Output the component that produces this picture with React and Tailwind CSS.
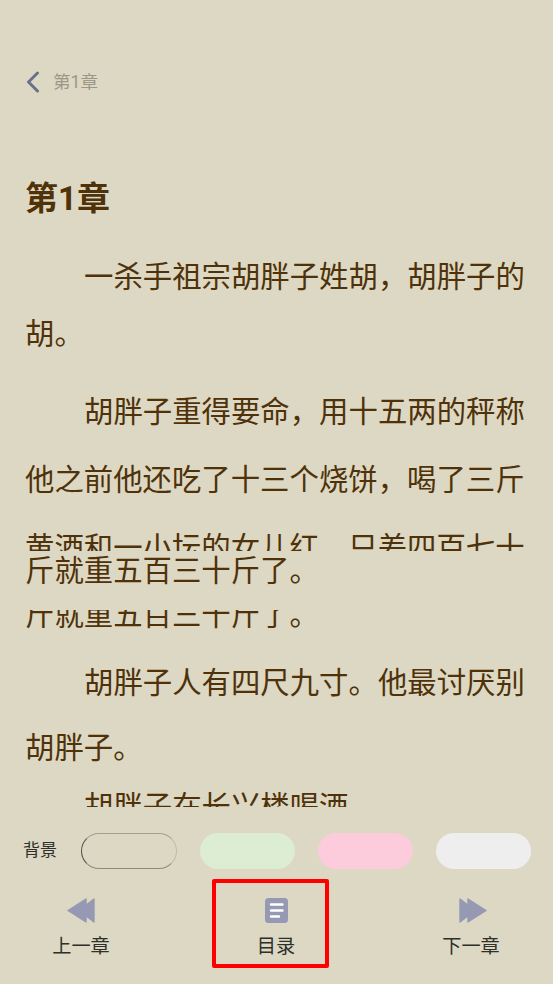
const Line = ({ className = "", children }) => (
  <p className={`text-[29.4px] leading-[30px] whitespace-nowrap ${className}`}>{children}</p>
);

const Clip = ({ className = "", children }) => (
  <div className={`overflow-hidden ${className}`}>{children}</div>
);

const PrevIcon = () => (
  <svg width="28" height="25" viewBox="0 0 28 25" fill="#9599b3" stroke="#9599b3" strokeWidth="1.4" strokeLinejoin="round">
    <path d="M1 12.5 19 1v23Z" />
    <path d="M12 12.5 27 1v23Z" />
  </svg>
);

const NextIcon = () => (
  <svg width="28" height="25" viewBox="0 0 28 25" fill="#9599b3" stroke="#9599b3" strokeWidth="1.4" strokeLinejoin="round">
    <path d="M27 12.5 9 1v23Z" />
    <path d="M16 12.5 1 1v23Z" />
  </svg>
);

const TocIcon = () => (
  <svg width="23" height="25" viewBox="0 0 23 25">
    <rect width="23" height="25" rx="3.5" fill="#9599b3" />
    <path d="M6 6.5h11.5M6 12.5h11.5M6 18.5h8" stroke="#fff" strokeWidth="2.4" strokeLinecap="round" />
  </svg>
);

const NavItem = ({ icon, label, className = "", iconClass = "" }) => (
  <div className={`flex flex-col items-center ${className}`}>
    <div className={`h-[25px] flex items-center ${iconClass}`}>{icon}</div>
    <span className="mt-[11px] text-[19.2px] leading-[26px] whitespace-nowrap text-[#2f2f2a]">{label}</span>
  </div>
);

export default function App() {
  return (
    <div
      className="relative h-[984px] w-[553px] overflow-hidden bg-[#ddd8c3] text-[#4f3209]"
      style={{ fontFamily: 'Roboto, "Noto Sans CJK SC", sans-serif' }}
    >
      {/* Chapter header */}
      <div className="flex items-center h-[30px] mt-[67px] pl-[26px]">
        <svg width="14" height="22" viewBox="0 0 14 22" fill="none" stroke="#69718a" strokeWidth="3" strokeLinecap="round" strokeLinejoin="round">
          <path d="M11.5 2 2.5 11l9 9" />
        </svg>
        <span className="ml-[13px] text-[17.6px] leading-[30px] text-[#9c9786]">第1章</span>
      </div>

      {/* Reading area */}
      <div className="px-[25px]">
        <h1 className="mt-[82px] text-[33px] leading-[40px] font-bold">第1章</h1>
        <Line className="mt-[43px] indent-[59px]">一杀手祖宗胡胖子姓胡，胡胖子的</Line>
        <Line className="mt-[27px]">胡。</Line>
        <Line className="mt-[48px] indent-[59px]">胡胖子重得要命，用十五两的秤称</Line>
        <Line className="mt-[38px]">他之前他还吃了十三个烧饼，喝了三斤</Line>
        <Clip className="mt-[38px] h-[18px]">
          <Line>黄酒和一小坛的女儿红，只差四百七十</Line>
        </Clip>
        <Line className="mt-[5px]">斤就重五百三十斤了。</Line>
        <Clip className="mt-[24px] h-[20px]">
          <Line className="-mt-[10px]">斤就重五百三十斤了。</Line>
        </Clip>
        <Line className="mt-[38px] indent-[59px]">胡胖子人有四尺九寸。他最讨厌别</Line>
        <Line className="mt-[35px]">胡胖子。</Line>
        <Clip className="mt-[29px] h-[15px]">
          <Line className="indent-[59px]">胡胖子在长兴楼喝酒</Line>
        </Clip>
      </div>

      {/* Background picker */}
      <div className="mt-[26px] flex items-center pl-[23px]">
        <span className="w-[58px] text-[17px] text-[#2f2f2a]">背景</span>
        <div className="flex gap-[23px]">
          <div className="h-[36px] w-[96px] rounded-[18px] border border-t-[#a39f8b] border-b-[#8f8b79] border-l-[#55524a] border-r-[#c0bcaa]" />
          <div className="h-[36px] w-[95px] rounded-[18px] bg-[#dcedd4]" />
          <div className="h-[36px] w-[95px] rounded-[18px] bg-[#fccbdc]" />
          <div className="h-[36px] w-[95px] rounded-[18px] bg-[#eeeeee]" />
        </div>
      </div>

      {/* Chapter navigation */}
      <div className="mt-[29px] flex pl-[52px]">
        <NavItem className="w-[58px]" icon={<PrevIcon />} label="上一章" />
        <NavItem className="ml-[147px] w-[38px]" icon={<TocIcon />} label="目录" />
        <NavItem className="ml-[147px] w-[58px]" iconClass="ml-[4px]" icon={<NextIcon />} label="下一章" />
      </div>

      {/* Red annotation box over the menu entry */}
      <div className="absolute left-[212px] top-[879px] h-[89px] w-[117px] rounded-[2px] border-4 border-[#fe0000]" />
    </div>
  );
}
